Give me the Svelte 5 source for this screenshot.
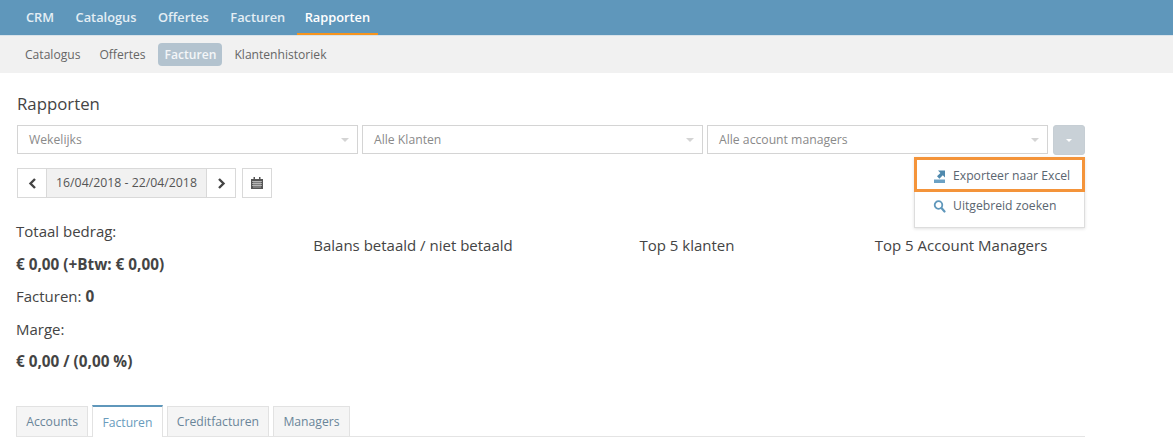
<script>
  const mainNav = ["CRM", "Catalogus", "Offertes", "Facturen", "Rapporten"];
  const subNav = ["Catalogus", "Offertes", "Facturen", "Klantenhistoriek"];
  const filters = ["Wekelijks", "Alle Klanten", "Alle account managers"];
  const tabs = ["Accounts", "Facturen", "Creditfacturen", "Managers"];
  const charts = ["Balans betaald / niet betaald", "Top 5 klanten", "Top 5 Account Managers"];
</script>

<header class="topbar">
  {#each mainNav as item}
    <a class="main-link" class:active={item === "Rapporten"}>{item}</a>
  {/each}
</header>

<nav class="subbar">
  {#each subNav as item}
    <a class="sub-link" class:active={item === "Facturen"}>{item}</a>
  {/each}
</nav>

<main class="page">
  <h1>Rapporten</h1>

  <div class="filters">
    {#each filters as label}
      <div class="select">
        <span>{label}</span>
        <i class="caret"></i>
      </div>
    {/each}
    <button class="more"><i class="caret small"></i></button>

    <div class="menu">
      <div class="menu-item export">
        <svg width="13" height="14" viewBox="0 0 13 14">
          <path d="M1 10.500h11V14H1z" fill="#6ba1c4" />
          <path d="M5 1.500h7v7l-2.200-2.200-3.400 3.400-2.400-2.400 3.400-3.400z" fill="#4f89ad" />
        </svg>
        <span>Exporteer naar Excel</span>
      </div>
      <div class="menu-item">
        <svg width="13" height="14" viewBox="0 0 13 14">
          <circle cx="5.500" cy="6" r="3.800" fill="none" stroke="#5f97bb" stroke-width="1.800" />
          <path d="M8.500 9l3 3.500" stroke="#5f97bb" stroke-width="2.200" stroke-linecap="round" />
        </svg>
        <span>Uitgebreid zoeken</span>
      </div>
    </div>
  </div>

  <div class="dates">
    <div class="range">
      <button class="arrow">
        <svg width="9" height="11" viewBox="0 0 9 11"><path d="M7 1L2.500 5.500 7 10" fill="none" stroke="#444" stroke-width="2.400" /></svg>
      </button>
      <span class="range-text">16/04/2018 - 22/04/2018</span>
      <button class="arrow">
        <svg width="9" height="11" viewBox="0 0 9 11"><path d="M2 1l4.500 4.500L2 10" fill="none" stroke="#444" stroke-width="2.400" /></svg>
      </button>
    </div>
    <button class="calendar">
      <svg width="12" height="12" viewBox="0 0 12 12">
        <path d="M0 2h12v10H0z" fill="#555" />
        <path d="M2.500 0h1.500v2H2.500zM8 0h1.500v2H8z" fill="#555" />
        <path d="M1 4.500h10M1 6.500h10M1 8.500h10M3 4v7M5 4v7M7 4v7M9 4v7" stroke="#ddd" stroke-width=".6" />
      </svg>
    </button>
  </div>

  <section class="summary">
    <div class="totals">
      <p>Totaal bedrag:</p>
      <p><b>€ 0,00 (+Btw: € 0,00)</b></p>
      <p>Facturen: <b>0</b></p>
      <p>Marge:</p>
      <p><b>€ 0,00 / (0,00 %)</b></p>
    </div>
    {#each charts as title}
      <div class="chart-title">{title}</div>
    {/each}
  </section>

  <div class="tabs">
    {#each tabs as tab}
      <a class="tab" class:active={tab === "Facturen"}>{tab}</a>
    {/each}
  </div>
</main>

<style>
  :global(body) {
    font-family: "Open Sans", sans-serif;
    color: #444;
    background: #fff;
  }

  .topbar {
    height: 35px;
    background: #5f97bb;
    border-bottom: 1px solid #d9e3ea;
    display: flex;
    padding-left: 16px;
    gap: 1.500px;
  }

  .main-link {
    padding: 0 10px;
    height: 33px;
    line-height: 35px;
    font-size: 12.800px;
    font-weight: 600;
    color: #e4eef4;
    border-bottom: 2px solid transparent;
  }

  .main-link.active {
    padding: 0 8px;
    min-width: 64px;
    color: #fff;
    border-bottom-color: #f7941d;
  }

  .subbar {
    height: 37px;
    background: #f1f1f1;
    display: flex;
    align-items: center;
    padding-left: 18px;
    gap: 5px;
  }

  .sub-link {
    padding: 3px 7px;
    font-size: 12.100px;
    font-weight: 500;
    line-height: 17px;
    color: #666;
    border-radius: 4px;
  }

  .sub-link.active {
    padding-right: 6px;
    background: #b3c3cf;
    color: #f4f6f8;
    font-weight: 600;
  }

  .page {
    padding: 0 88px 0 17px;
  }

  h1 {
    margin: 0;
    padding-top: 20px;
    height: 32px;
    font-size: 16.800px;
    font-weight: 400;
    line-height: 22px;
    color: #444;
  }

  .filters {
    position: relative;
    display: flex;
    gap: 4px;
  }

  .select {
    flex: 1;
    height: 29px;
    box-sizing: border-box;
    border: 1px solid #d4d4d4;
    display: flex;
    align-items: center;
    justify-content: space-between;
    padding: 0 8px 0 11px;
    font-size: 12.200px;
    color: #8a8a8a;
  }

  .caret {
    width: 0;
    height: 0;
    border-left: 4px solid transparent;
    border-right: 4px solid transparent;
    border-top: 4px solid #d4d4d4;
  }

  .caret.small {
    display: block;
    border-left-width: 3px;
    border-right-width: 3px;
    border-top: 3px solid #fff;
  }

  .more {
    width: 32px;
    height: 30px;
    margin-left: 1px;
    padding: 0;
    border: 1px solid #c6ced4;
    border-radius: 3px;
    background: #c9d1d7;
    display: flex;
    align-items: center;
    justify-content: center;
  }

  .menu {
    position: absolute;
    top: 32px;
    right: 0;
    width: 171px;
    height: 71px;
    box-sizing: border-box;
    background: #fff;
    border: 1px solid #ddd;
    box-shadow: 0 1px 3px rgba(0, 0, 0, 0.12);
    z-index: 2;
  }

  .menu-item {
    height: 27px;
    display: flex;
    align-items: center;
    gap: 7px;
    padding-left: 18px;
    font-size: 12.200px;
    color: #5a6570;
  }

  .menu-item.export {
    height: 35px;
    box-sizing: border-box;
    margin: -1px -1px 0;
    padding: 2px 0 0 16px;
    border: 3px solid #f4943a;
  }

  .dates {
    display: flex;
    gap: 6px;
    margin-top: 13px;
  }

  .range {
    display: flex;
    height: 30px;
    box-sizing: border-box;
    border: 1px solid #d9d9d9;
  }

  .arrow,
  .calendar {
    background: #fff;
    border: 0;
    padding: 0;
    display: flex;
    align-items: center;
    justify-content: center;
  }

  .arrow {
    width: 28px;
  }

  .range-text {
    width: 159px;
    background: #f1f1f1;
    border-left: 1px solid #d9d9d9;
    border-right: 1px solid #d9d9d9;
    text-align: center;
    font-size: 12.300px;
    line-height: 28px;
    color: #555;
  }

  .calendar {
    width: 30px;
    height: 30px;
    border: 1px solid #d9d9d9;
  }

  .summary {
    display: grid;
    grid-template-columns: repeat(4, 274px);
    margin: 17px 0 0 -15px;
  }

  .totals {
    padding-left: 14px;
  }

  .totals p {
    margin: 0;
    height: 32.500px;
    line-height: 32.500px;
    font-size: 15px;
    color: #444;
  }

  .totals b {
    font-size: 15.300px;
    font-weight: 700;
  }

  .chart-title {
    padding-top: 14px;
    text-align: center;
    font-size: 15px;
    line-height: 33px;
    color: #444;
  }

  .tabs {
    display: flex;
    gap: 4px;
    margin: 27px 0 0 -1px;
    height: 31px;
    border-bottom: 1px solid #e4e4e4;
  }

  .tab {
    height: 29px;
    margin-top: 1px;
    padding: 0 9.200px;
    background: #f5f5f5;
    border: 1px solid #e2e2e2;
    border-bottom: 0;
    font-size: 12.200px;
    font-weight: 500;
    line-height: 29px;
    color: #6a8599;
  }

  .tab.active {
    height: 30px;
    margin-top: 0;
    background: #fff;
    border-top: 2px solid #5f97bb;
    line-height: 31px;
    color: #6a9cbd;
  }
</style>
